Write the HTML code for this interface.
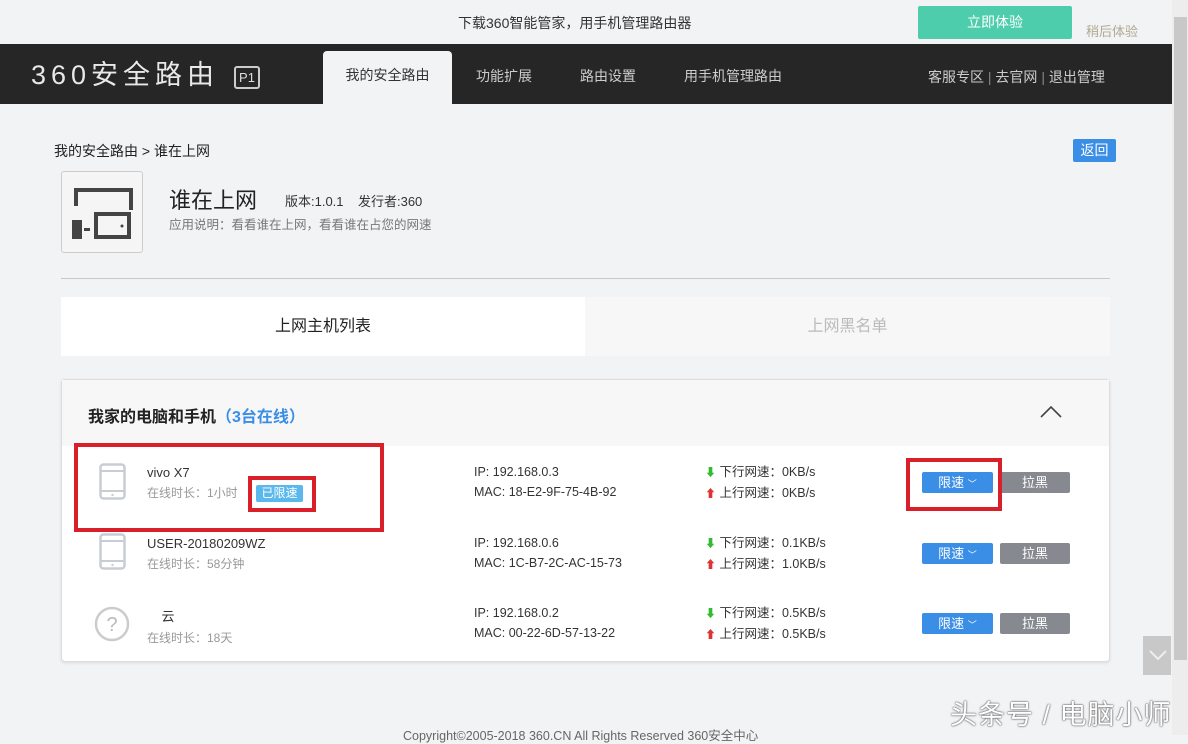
<!DOCTYPE html>
<html><head><meta charset="utf-8"><style>
*{margin:0;padding:0;box-sizing:border-box}
body{width:1188px;height:735px;overflow:hidden;background:#f2f3f5;font-family:"Liberation Sans","Noto Sans CJK SC",sans-serif;position:relative;color:#333}
.abs{position:absolute}
.top{left:0;top:0;width:1172px;height:44px;background:#f2f3f5}
.nav{left:0;top:44px;width:1172px;height:60px;background:#262626}
.sb{left:1172px;top:0;width:16px;height:735px;background:#ededed}
.thumb{left:1174px;top:17px;width:13px;height:643px;background:#c8c8c8}
.btn{border-radius:2px;color:#fff;font-size:13px;text-align:center;line-height:21px;height:21px}
.row .name{font-size:13px;color:#333}
.row .sub{font-size:12px;color:#999}
.ip{font-size:12.5px;color:#333;line-height:20px}
.sp{font-size:12.5px;color:#333;line-height:20px}
.red{border:4px solid #d9202a}
</style></head><body>
<div class="abs top"></div>
<div class="abs" style="left:458px;top:13px;font-size:14px;color:#333">下载360智能管家，用手机管理路由器</div>
<div class="abs btn" style="left:918px;top:6px;width:154px;height:33px;line-height:33px;background:#4ecdac;font-size:14px">立即体验</div>
<div class="abs" style="left:1086px;top:21px;font-size:13px;color:#b0a890">稍后体验</div>
<div class="abs nav"></div>
<div class="abs" style="left:31px;top:60px;font-size:27px;color:#e8e8e8;letter-spacing:5px;line-height:30px">360安全路由</div>
<div class="abs" style="left:234px;top:66px;width:26px;height:23px;border:2px solid #ccc;border-radius:3px;color:#ddd;font-size:13px;text-align:center;line-height:19px">P1</div>
<div class="abs" style="left:323px;top:51px;width:129px;height:53px;background:#f2f3f5;border-radius:4px 4px 0 0;text-align:center;line-height:48px;font-size:14px;color:#333">我的安全路由</div>
<div class="abs" style="left:476px;top:66px;font-size:14px;color:#ccc">功能扩展</div>
<div class="abs" style="left:580px;top:66px;font-size:14px;color:#ccc">路由设置</div>
<div class="abs" style="left:684px;top:66px;font-size:14px;color:#ccc">用手机管理路由</div>
<div class="abs" style="left:928px;top:67px;font-size:14px;color:#ccc">客服专区 <span style="color:#888">|</span> 去官网 <span style="color:#888">|</span> 退出管理</div>
<div class="abs sb"></div><div class="abs thumb"></div>
<div class="abs" style="left:54px;top:141px;font-size:14px;color:#222">我的安全路由 &gt; 谁在上网</div>
<div class="abs btn" style="left:1073px;top:139px;width:43px;height:23px;line-height:23px;background:#3a8ee6;font-size:14px">返回</div>
<div class="abs" style="left:61px;top:171px;width:82px;height:82px;border:1px solid #ccc;border-radius:3px;background:#f5f5f5">
<svg width="80" height="80" viewBox="0 0 80 80"><path d="M14 34V18h55v20" fill="none" stroke="#444" stroke-width="4"/><rect x="34" y="42" width="33" height="23" fill="none" stroke="#444" stroke-width="4"/><rect x="10" y="48" width="10" height="19" fill="#444"/><rect x="22" y="56" width="6" height="3" fill="#444"/><circle cx="60" cy="54" r="1.5" fill="#444"/></svg></div>
<div class="abs" style="left:169px;top:183px;font-size:22px;color:#222">谁在上网</div>
<div class="abs" style="left:285px;top:191px;font-size:13px;color:#333">版本:1.0.1 &nbsp;&nbsp; 发行者:360</div>
<div class="abs" style="left:169px;top:214px;font-size:12.5px;color:#777">应用说明：看看谁在上网，看看谁在占您的网速</div>
<div class="abs" style="left:61px;top:278px;width:1049px;height:1px;background:#c8c8c8"></div>
<div class="abs" style="left:61px;top:297px;width:524px;height:59px;background:#fff;text-align:center;line-height:59px;font-size:16px;color:#222">上网主机列表</div>
<div class="abs" style="left:585px;top:297px;width:525px;height:59px;background:#f7f7f7;text-align:center;line-height:59px;font-size:16px;color:#bbb">上网黑名单</div>
<div class="abs" style="left:61px;top:379px;width:1049px;height:283px;background:#fff;border:1px solid #ddd;border-radius:4px;box-shadow:0 1px 3px rgba(0,0,0,.1)"></div>
<div class="abs" style="left:62px;top:380px;width:1047px;height:66px;background:#f7f7f8"></div>
<div class="abs" style="left:88px;top:403px;font-size:16px;font-weight:bold;color:#222">我家的电脑和手机<span style="color:#3a8ee6">（3台在线）</span></div>
<svg class="abs" style="left:1040px;top:404px" width="22" height="14"><path d="M1 13L11 3l10 10" fill="none" stroke="#444" stroke-width="1.6"/></svg>
<svg class="abs" style="left:99px;top:463px" width="28" height="38"><rect x="1.5" y="1.5" width="24" height="34" rx="3" fill="none" stroke="#c8cdd3" stroke-width="2.5"/><line x1="2" y1="8" x2="25" y2="8" stroke="#c8cdd3" stroke-width="2"/><line x1="2" y1="28" x2="25" y2="28" stroke="#c8cdd3" stroke-width="2"/><circle cx="13.5" cy="32" r="1.2" fill="#c8cdd3"/></svg>
<svg class="abs" style="left:99px;top:533px" width="28" height="38"><rect x="1.5" y="1.5" width="24" height="34" rx="3" fill="none" stroke="#c8cdd3" stroke-width="2.5"/><line x1="2" y1="8" x2="25" y2="8" stroke="#c8cdd3" stroke-width="2"/><line x1="2" y1="28" x2="25" y2="28" stroke="#c8cdd3" stroke-width="2"/><circle cx="13.5" cy="32" r="1.2" fill="#c8cdd3"/></svg>
<svg class="abs" style="left:94px;top:606px" width="36" height="36"><circle cx="18" cy="18" r="16" fill="none" stroke="#ccc" stroke-width="2.5"/><text x="18" y="25" font-size="20" text-anchor="middle" fill="#bbb" font-family="Liberation Sans">?</text></svg>
<div class="abs row" style="left:147px;top:465px"><div class="name">vivo X7</div><div class="sub" style="margin-top:4px">在线时长：1小时</div></div>
<div class="abs btn" style="left:256px;top:485px;width:47px;height:17px;line-height:17px;font-size:12px;background:#5bb8ec">已限速</div>
<div class="abs row" style="left:147px;top:536px"><div class="name">USER-20180209WZ</div><div class="sub" style="margin-top:4px">在线时长：58分钟</div></div>
<div class="abs row" style="left:147px;top:606px"><div class="name">&nbsp;&nbsp;&nbsp; 云</div><div class="sub" style="margin-top:4px">在线时长：18天</div></div>
<div class="abs ip" style="left:474px;top:462px">IP: 192.168.0.3<br>MAC: 18-E2-9F-75-4B-92</div>
<div class="abs ip" style="left:474px;top:533px">IP: 192.168.0.6<br>MAC: 1C-B7-2C-AC-15-73</div>
<div class="abs ip" style="left:474px;top:603px">IP: 192.168.0.2<br>MAC: 00-22-6D-57-13-22</div>
<div class="abs sp" style="left:705px;top:462px"><span style="color:#3b3;font-size:11px">⬇</span> 下行网速：0KB/s<br><span style="color:#d33;font-size:11px">⬆</span> 上行网速：0KB/s</div>
<div class="abs sp" style="left:705px;top:533px"><span style="color:#3b3;font-size:11px">⬇</span> 下行网速：0.1KB/s<br><span style="color:#d33;font-size:11px">⬆</span> 上行网速：1.0KB/s</div>
<div class="abs sp" style="left:705px;top:603px"><span style="color:#3b3;font-size:11px">⬇</span> 下行网速：0.5KB/s<br><span style="color:#d33;font-size:11px">⬆</span> 上行网速：0.5KB/s</div>
<div class="abs btn" style="left:922px;top:472px;width:71px;background:#3a8ee6">限速 <span style="font-size:9px">﹀</span></div>
<div class="abs btn" style="left:1000px;top:472px;width:70px;background:#868a90">拉黑</div>
<div class="abs btn" style="left:922px;top:543px;width:71px;background:#3a8ee6">限速 <span style="font-size:9px">﹀</span></div>
<div class="abs btn" style="left:1000px;top:543px;width:70px;background:#868a90">拉黑</div>
<div class="abs btn" style="left:922px;top:613px;width:71px;background:#3a8ee6">限速 <span style="font-size:9px">﹀</span></div>
<div class="abs btn" style="left:1000px;top:613px;width:70px;background:#868a90">拉黑</div>
<div class="abs red" style="left:74px;top:443px;width:310px;height:89px"></div>
<div class="abs red" style="left:248px;top:476px;width:68px;height:36px"></div>
<div class="abs red" style="left:906px;top:458px;width:96px;height:53px"></div>
<div class="abs" style="left:1143px;top:636px;width:28px;height:39px;background:#c8c8c8"></div>
<svg class="abs" style="left:1148px;top:648px" width="20" height="14"><path d="M2 3l8 8 8-8" fill="none" stroke="#eee" stroke-width="2"/></svg>
<div class="abs" style="left:403px;top:725px;font-size:12.5px;color:#666">Copyright©2005-2018 360.CN All Rights Reserved 360安全中心</div>
<div class="abs" style="left:950px;top:693px;font-size:27px;color:#fff;text-shadow:0 0 2px #555,0 0 1px #333;letter-spacing:1px">头条号 / 电脑小师</div>
</body></html>
